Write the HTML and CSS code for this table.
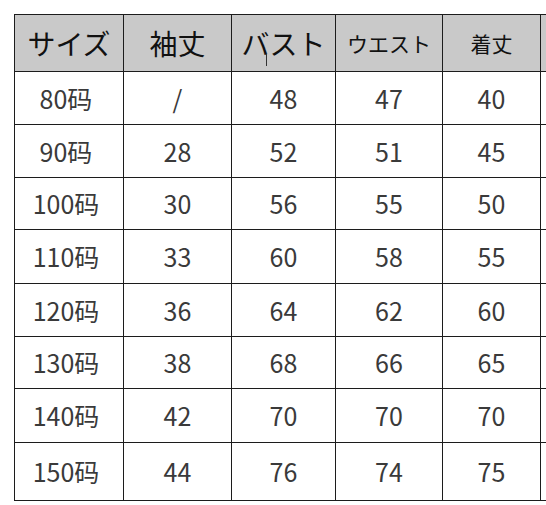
FILE: index.html
```html
<!DOCTYPE html>
<html lang="ja">
<head>
<meta charset="utf-8">
<link rel="stylesheet" href="styles.css">
</head>
<body>
<div class="sheet">
  <div class="cell head big">サイズ</div>
  <div class="cell head big">袖丈</div>
  <div class="cell head big cursor-host">バスト<span class="cursor"></span></div>
  <div class="cell head small">ウエスト</div>
  <div class="cell head small">着丈</div>
  <div class="cell head edge"></div>

  <div class="cell first">80码</div><div class="cell">/</div><div class="cell">48</div><div class="cell">47</div><div class="cell">40</div><div class="cell edge"></div>
  <div class="cell first">90码</div><div class="cell">28</div><div class="cell">52</div><div class="cell">51</div><div class="cell">45</div><div class="cell edge"></div>
  <div class="cell first">100码</div><div class="cell">30</div><div class="cell">56</div><div class="cell">55</div><div class="cell">50</div><div class="cell edge"></div>
  <div class="cell first">110码</div><div class="cell">33</div><div class="cell">60</div><div class="cell">58</div><div class="cell">55</div><div class="cell edge"></div>
  <div class="cell first">120码</div><div class="cell">36</div><div class="cell">64</div><div class="cell">62</div><div class="cell">60</div><div class="cell edge"></div>
  <div class="cell first">130码</div><div class="cell">38</div><div class="cell">68</div><div class="cell">66</div><div class="cell">65</div><div class="cell edge"></div>
  <div class="cell first">140码</div><div class="cell">42</div><div class="cell">70</div><div class="cell">70</div><div class="cell">70</div><div class="cell edge"></div>
  <div class="cell first">150码</div><div class="cell">44</div><div class="cell">76</div><div class="cell">74</div><div class="cell">75</div><div class="cell edge"></div>
</div>
</body>
</html>
```
FILE: styles.css
```css
html, body {
  margin: 0;
  padding: 0;
  background: #fff;
  overflow: hidden;
}
body {
  width: 546px;
  height: 505px;
  padding: 14px 0 0 14px;
  box-sizing: border-box;
  font-family: "Noto Sans CJK JP", "Noto Sans", sans-serif;
}
.sheet {
  display: grid;
  grid-template-columns: 109px 108px 104px 107px 98px 5px;
  grid-template-rows: 57px 53px 53px 52px 54px 53px 52px 54px 58px;
  width: max-content;
  border-left: 1px solid #1c1c1c;
  border-top: 1px solid #1c1c1c;
}
.cell {
  display: flex;
  align-items: center;
  justify-content: center;
  border-right: 1px solid #1c1c1c;
  border-bottom: 1px solid #1c1c1c;
  font-size: 25px;
  color: #3a3a3a;
  line-height: 1;
}
.cell.edge {
  border-right: none;
}
.first {
  padding-right: 6px;
}
.head {
  background: #c9c9c9;
  color: #111;
}
.head.big {
  font-size: 28px;
}
.head.small {
  font-size: 21px;
}
.cursor-host {
  position: relative;
}
.cursor {
  position: absolute;
  left: 34px;
  top: 39px;
  width: 1px;
  height: 12px;
  background: #333;
}
```
